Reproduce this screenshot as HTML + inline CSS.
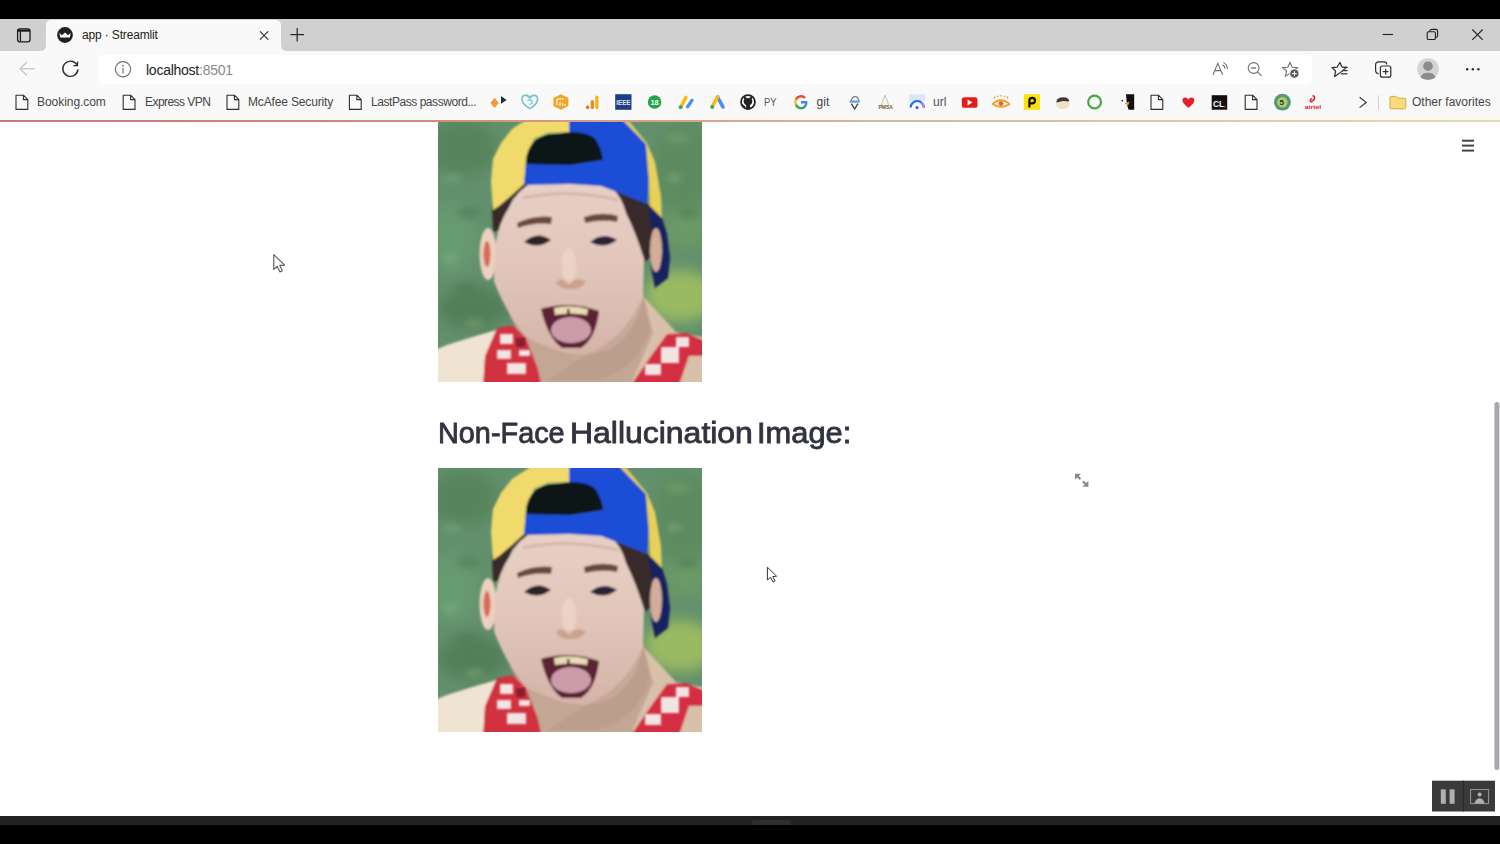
<!DOCTYPE html>
<html><head><meta charset="utf-8">
<style>
*{margin:0;padding:0;box-sizing:border-box}
html,body{width:1500px;height:844px;overflow:hidden;background:#fff;font-family:"Liberation Sans",sans-serif}
.a{position:absolute}
#topblack{left:0;top:0;width:1500px;height:19px;background:#000}
#tabstrip{left:0;top:19px;width:1500px;height:32px;background:#cfd0cf}
#tab{left:46px;top:20px;width:235px;height:31px;background:#f9f9f9;border-radius:5px 5px 0 0}
#toolbar{left:0;top:51px;width:1500px;height:35px;background:#f9f9f9}
#addr{left:98px;top:55px;width:1214px;height:29px;background:#fff;border-radius:5px}
#bm{left:0;top:86px;width:1500px;height:34px;background:#f9f9f9}
#deco{left:0;top:119.5px;width:1500px;height:2.5px;background:linear-gradient(90deg,#c47c6e,#d09078 30%,#d8b898 60%,#e2dcb0);filter:blur(0.5px)}
#content{left:0;top:121px;width:1500px;height:695px;background:#fff}
#bottom1{left:0;top:816px;width:1500px;height:9px;background:#212121}
#bottom2{left:0;top:825px;width:1500px;height:19px;background:#000}
.t{white-space:nowrap;color:#333}
.bmt{font-size:12px;color:#454545;top:95px}
</style></head>
<body>
<div class="a" id="topblack"></div>
<div class="a" id="tabstrip"></div>
<div class="a" id="tab"></div>
<div class="a" id="toolbar"></div>
<div class="a" id="addr"></div>
<div class="a" id="bm"></div>
<div class="a" id="content"></div>

<div class="a t" style="left:82px;top:28px;font-size:12px;color:#222;letter-spacing:-0.15px">app · Streamlit</div>
<div class="a t" style="left:146px;top:62px;font-size:14px;color:#222;letter-spacing:-0.25px">localhost<span style="color:#888">:8501</span></div>
<div class="a t bmt" style="left:37px;letter-spacing:-0.05px">Booking.com</div>
<div class="a t bmt" style="left:145px;letter-spacing:-0.55px">Express VPN</div>
<div class="a t bmt" style="left:248px;letter-spacing:-0.15px">McAfee Security</div>
<div class="a t bmt" style="left:371px;letter-spacing:-0.45px">LastPass password...</div>
<div class="a t bmt" style="left:1412px">Other favorites</div>

<div class="a t" style="left:438px;top:415.5px;font-size:29.8px;font-weight:normal;color:#31333f;-webkit-text-stroke:0.85px #31333f;transform-origin:0 0;transform:scaleX(0.968)">Non-Face</div><div class="a t" style="left:570px;top:415.5px;font-size:29.8px;font-weight:normal;color:#31333f;-webkit-text-stroke:0.85px #31333f;transform-origin:0 0;transform:scaleX(1.072)">Hallucination</div><div class="a t" style="left:757px;top:415.5px;font-size:29.8px;font-weight:normal;color:#31333f;-webkit-text-stroke:0.85px #31333f;transform-origin:0 0;transform:scaleX(1.035)">Image:</div>

<svg width="0" height="0" style="position:absolute">
<defs>
<filter id="bl" x="-5%" y="-5%" width="110%" height="110%"><feGaussianBlur stdDeviation="1.3"/></filter>
<filter id="bl3" x="-50%" y="-50%" width="200%" height="200%"><feGaussianBlur stdDeviation="3.5"/></filter>
<filter id="bl2" x="-30%" y="-30%" width="160%" height="160%"><feGaussianBlur stdDeviation="7"/></filter>
<clipPath id="cp"><rect x="0" y="0" width="264" height="264"/></clipPath>
<linearGradient id="skin" x1="0" y1="0" x2="0" y2="1">
<stop offset="0" stop-color="#e8d0c6"/><stop offset="0.5" stop-color="#e2c6ba"/><stop offset="1" stop-color="#d4b4a8"/>
</linearGradient>
<symbol id="face" viewBox="0 0 264 264">
<g clip-path="url(#cp)">
<rect x="-10" y="-10" width="284" height="284" fill="#62906c"/>
<g filter="url(#bl2)">
<ellipse cx="25" cy="30" rx="35" ry="28" fill="#56845c"/>
<ellipse cx="15" cy="120" rx="25" ry="35" fill="#689a70"/>
<ellipse cx="35" cy="190" rx="35" ry="22" fill="#527f58"/>
<ellipse cx="245" cy="50" rx="30" ry="45" fill="#5d8b5e"/>
<ellipse cx="248" cy="110" rx="22" ry="20" fill="#6a9a66"/>
<ellipse cx="242" cy="178" rx="36" ry="26" fill="#9aba62"/>
</g>
<g filter="url(#bl3)" opacity="0.7">
<ellipse cx="14" cy="60" rx="10" ry="4" fill="#74a67a"/>
<ellipse cx="30" cy="95" rx="12" ry="5" fill="#4f7e58"/>
<ellipse cx="12" cy="140" rx="9" ry="5" fill="#78aa80"/>
<ellipse cx="28" cy="170" rx="12" ry="4" fill="#4c7a54"/>
<ellipse cx="36" cy="205" rx="10" ry="4" fill="#7aa070"/>
<ellipse cx="240" cy="20" rx="12" ry="5" fill="#70a070"/>
<ellipse cx="250" cy="95" rx="10" ry="5" fill="#507e56"/>
<ellipse cx="236" cy="60" rx="8" ry="4" fill="#78a878"/>
</g>
<g filter="url(#bl)">
<!-- left shoulder -->
<path d="M-6 233 L9 227 L31 220 L55 213 L75 207 L88 220 L47 240 L45 270 L-6 270Z" fill="#efe4d2"/>
<!-- right shoulder -->
<path d="M203 176 L238 214 L270 220 L270 270 L191 270Z" fill="#d9c0aa"/>
<!-- neck -->
<path d="M72 198 L150 236 L205 175 L215 215 L191 270 L100 270 L86 222Z" fill="#c4a694"/>
<!-- hair dark -->
<path d="M55 114 L54 88 L74 66 L186 64 L209 85 L224 104 L222 132 L207 144 L196 118 L188 98 L180 80 L75 80 L62 112Z" fill="#38292a"/>
<!-- left ear -->
<ellipse cx="50" cy="136" rx="8.5" ry="26" fill="#ecd0c0"/>
<ellipse cx="49" cy="136" rx="3.5" ry="13" fill="#d86a58"/>
<!-- right ear -->

<!-- face -->
<path d="M72 88 Q80 70 100 62 L163 62 Q182 72 188 95 Q198 115 206 141 L205 179 Q198 216 172 232 Q150 240 125 234 Q100 226 88 219 L75 202 Q62 180 56 163 L57 130 Q60 105 72 88Z" fill="url(#skin)"/>
<!-- forehead wrinkles shade -->
<path d="M85 80 Q130 70 180 82" fill="none" stroke="#c8a08e" stroke-width="3" opacity="0.5"/>
<!-- yellow cap -->
<path d="M91 -6 L134 -6 L134 14 L110 15 L96 21 L88 39 L86 66 L74 77 L61 88 L55 92 L53 63 L55 41 L63 25 L74 11 L91 0Z" fill="#f0da6c"/>
<!-- blue cap -->
<path d="M131 -6 L183 -6 L183 0 L208 26 L211 62 L209 86 L184 76 L163 68 L132 66 L86 67 L88 45 L132 47 L165 42 L157 22 L131 14Z" fill="#1d4ed6"/>
<!-- right yellow strip -->
<path d="M183 -6 L190 2 L209 25 L217 44 L223 78 L224 102 L212 92 L211 62 L208 26 L183 0Z" fill="#e9d058"/>
<!-- navy strap -->
<path d="M210 86 L224 100 L229 116 L232 140 L230 160 L217 170 L213 150 L215 120Z" fill="#18225e"/>
<ellipse cx="218" cy="132" rx="6" ry="22" fill="#d4ac9a"/>
<!-- black opening -->
<path d="M88 46 Q88 23 108 17 L132 14 Q152 14 158 22 Q164 32 165 42 L132 47Z" fill="#101318"/>
<!-- eyebrows -->
<path d="M79 105 Q96 97 114 99 L113 106 Q96 104 80 110Z" fill="#6a4a3e"/>
<path d="M146 99 Q164 93 180 98 L179 104 Q164 101 147 105Z" fill="#6a4a3e"/>
<!-- eyes -->
<path d="M86 124 Q99 112 113 122 Q100 132 86 124Z" fill="#2e2228"/>
<path d="M152 124 Q165 113 179 122 Q166 132 152 124Z" fill="#2c2434"/>
<!-- nose -->
<path d="M118 165 Q124 172 132 171 Q142 172 148 164 Q142 160 138 162 L126 162 Q120 160 118 165Z" fill="#c59a84" opacity="0.8"/>
<ellipse cx="131" cy="148" rx="7" ry="18" fill="#f0dccc" opacity="0.6"/>
<!-- mouth -->
<path d="M103 191 Q132 182 161 193 Q158 220 143 230 L124 230 Q110 220 103 191Z" fill="#5a2030"/>
<ellipse cx="133" cy="212" rx="20" ry="13" fill="#cc9caa"/>
<path d="M116 190 Q132 186 150 191 L149 197 Q132 194 117 197Z" fill="#e8dcb4"/>
<rect x="129" y="191" width="2.5" height="7" fill="#5a2030"/>
<!-- stubble -->
<path d="M150 236 Q185 222 205 179 L212 210 Q200 250 160 262 L110 262 Z" fill="#b49482" opacity="0.45"/>
<!-- red shirt left -->
<path d="M45 270 L47 238 L59 210 L75 207 L88 220 L100 251 L104 270Z" fill="#d2303f"/>
<!-- red shirt right -->
<path d="M191 270 L213 238 L229 216 L248 215 L270 224 L270 238 L251 238 L240 270Z" fill="#d42f42"/>
</g>
<g filter="url(#bl)" fill="#f3e4e4">
<rect x="62" y="216" width="13" height="10"/>
<rect x="59" y="232" width="14" height="9"/>
<rect x="69" y="245" width="19" height="11"/>
<rect x="81" y="232" width="11" height="6"/>
<rect x="223" y="229" width="18" height="16"/>
<rect x="207" y="246" width="16" height="11"/>
<rect x="238" y="219" width="13" height="10"/>
</g>
<g filter="url(#bl)" fill="#8a1a30">
<rect x="78" y="220" width="9" height="9"/>
</g>
</g>
</symbol>
</defs>
</svg>
<div class="a" style="left:438px;top:122px;width:264px;height:260px;overflow:hidden"><svg style="position:absolute;left:0;top:-4px" width="264" height="264"><use href="#face"/></svg></div>
<svg class="a" style="left:438px;top:468px" width="264" height="264"><use href="#face"/></svg>

<div class="a" id="deco"></div>
<svg class="a" style="left:0;top:0" width="1500" height="130" viewBox="0 0 1500 130">
<!-- tab actions icon -->
<g fill="none" stroke="#1a1a1a" stroke-width="1.3">
<rect x="17.6" y="28.8" width="12.4" height="13" rx="2.2"/>
<line x1="17.6" y1="30.6" x2="30" y2="30.6" stroke-width="2.2"/>
<line x1="20.4" y1="31" x2="20.4" y2="41.5"/>
</g>
<!-- tab flare curves -->
<path d="M40 51 Q46 51 46 45 L46 51Z" fill="#f9f9f9"/>
<path d="M287 51 Q281 51 281 45 L281 51Z" fill="#f9f9f9"/>
<!-- favicon -->
<circle cx="65" cy="35" r="7.9" fill="#1f1f24"/>
<path d="M59.3 33 L62 35.2 L65 32.4 L68 35.2 L70.7 33 L69.8 37.6 L60.2 37.6Z" fill="#fff"/>
<!-- tab close -->
<g stroke="#333" stroke-width="1.2"><line x1="260" y1="31.4" x2="268.2" y2="39.6"/><line x1="268.2" y1="31.4" x2="260" y2="39.6"/></g>
<!-- new tab plus -->
<g stroke="#222" stroke-width="1.2"><line x1="290.4" y1="34.6" x2="304" y2="34.6"/><line x1="297.2" y1="27.9" x2="297.2" y2="41.5"/></g>
<!-- window controls -->
<line x1="1382.6" y1="34.5" x2="1393" y2="34.5" stroke="#222" stroke-width="1.1"/>
<g fill="none" stroke="#222" stroke-width="1.1">
<rect x="1427.2" y="31.7" width="8.2" height="7.8" rx="1.3"/>
<path d="M1429.4 31.5 Q1429.8 29.4 1431.8 29.4 L1435.8 29.4 Q1437.6 29.4 1437.6 31.2 L1437.6 35.4 Q1437.6 37.2 1435.6 37.6"/>
</g>
<g stroke="#222" stroke-width="1.1"><line x1="1472.3" y1="29.5" x2="1482.7" y2="39.8"/><line x1="1482.7" y1="29.5" x2="1472.3" y2="39.8"/></g>
<!-- back -->
<g fill="none" stroke="#c4c4c4" stroke-width="1.2"><path d="M27 62 L20 68.8 L27 75.6"/><line x1="20" y1="68.8" x2="35" y2="68.8"/></g>
<!-- reload -->
<g fill="none" stroke="#2a2a2a" stroke-width="1.4"><path d="M76.8 64.6 A7.6 7.6 0 1 0 78 69.4"/><path d="M77.6 61.6 L77.4 65.6 L73.4 65.6"/></g>
<!-- info -->
<g fill="none" stroke="#6e6e6e" stroke-width="1.2"><circle cx="123" cy="69.3" r="7.6"/><line x1="123" y1="67.8" x2="123" y2="73.4"/></g>
<circle cx="123" cy="65.6" r="0.9" fill="#6e6e6e"/>
<!-- read aloud -->
<g fill="none" stroke="#6f6f6f" stroke-width="1.1"><path d="M1213 74.8 L1217.8 63.4 L1222.6 74.8 M1214.8 70.6 L1220.8 70.6"/><path d="M1223.4 62.4 Q1227.4 64.8 1227.4 69"/><path d="M1222.6 64.8 Q1224.8 66.2 1225 68.6"/></g>
<!-- zoom out -->
<g fill="none" stroke="#6f6f6f" stroke-width="1.1"><circle cx="1253.6" cy="68" r="5.4"/><line x1="1257.4" y1="71.8" x2="1261.6" y2="75.8"/><line x1="1251" y1="68" x2="1256.2" y2="68" stroke-width="1.3"/></g>
<!-- star add -->
<path d="M1290 62.4 L1292.2 67.2 L1297.4 67.6 L1293.4 71 L1294.6 76.2 L1290 73.4 L1285.4 76.2 L1286.6 71 L1282.6 67.6 L1287.8 67.2Z" fill="none" stroke="#6f6f6f" stroke-width="1.1"/>
<circle cx="1294.4" cy="73.6" r="4.6" fill="#5a5a5a" stroke="#fff" stroke-width="0.8"/>
<g stroke="#fff" stroke-width="1"><line x1="1292" y1="73.6" x2="1296.8" y2="73.6"/><line x1="1294.4" y1="71.2" x2="1294.4" y2="76"/></g>
<!-- favorites -->
<path d="M1340 62.4 L1342 67 L1346.6 67.4 L1343 70.4 L1339 73.6 L1334.6 76.4 L1335.6 71 L1332 67.6 L1337 67.2Z" fill="none" stroke="#2e2e2e" stroke-width="1.2" stroke-linejoin="round"/>
<g stroke="#2e2e2e" stroke-width="1.2"><line x1="1342.6" y1="67.4" x2="1347.6" y2="67.4"/><line x1="1342" y1="70.6" x2="1347.6" y2="70.6"/><line x1="1341" y1="73.8" x2="1347.6" y2="73.8"/></g>
<!-- collections -->
<g fill="none" stroke="#2e2e2e" stroke-width="1.2">
<path d="M1378.6 73.6 Q1375.6 73.6 1375.6 70 L1375.6 64.8 Q1375.6 61.8 1378.8 61.8 L1384 61.8 Q1386.6 61.8 1386.8 64.4"/>
<rect x="1380.4" y="66" width="10.4" height="11.2" rx="2"/>
<line x1="1385.6" y1="68.8" x2="1385.6" y2="74.4"/><line x1="1382.8" y1="71.6" x2="1388.4" y2="71.6"/>
</g>
<!-- profile -->
<circle cx="1428" cy="69" r="10.8" fill="#d4d4d4"/>
<circle cx="1428" cy="66.2" r="4.8" fill="#8c8c8c"/>
<path d="M1420.6 77.6 Q1421.6 72.8 1428 72.8 Q1434.4 72.8 1435.4 77.6 Q1432 79.8 1428 79.8 Q1424 79.8 1420.6 77.6Z" fill="#8c8c8c"/>
<!-- more -->
<g fill="#2a2a2a"><circle cx="1467.2" cy="69.2" r="1.2"/><circle cx="1472.8" cy="69.2" r="1.2"/><circle cx="1478.4" cy="69.2" r="1.2"/></g>
<!-- bookmark doc icons -->
<g fill="none" stroke="#2e2e2e" stroke-width="1.1" stroke-linejoin="round">
<path d="M16 95.2 L23.4 95.2 L27.8 99.6 L27.8 109.4 L16 109.4Z M23.4 95.2 L23.4 99.6 L27.8 99.6"/>
<path d="M123.2 95.2 L130.6 95.2 L135 99.6 L135 109.4 L123.2 109.4Z M130.6 95.2 L130.6 99.6 L135 99.6"/>
<path d="M227 95.2 L234.4 95.2 L238.8 99.6 L238.8 109.4 L227 109.4Z M234.4 95.2 L234.4 99.6 L238.8 99.6"/>
<path d="M349.4 95.2 L356.8 95.2 L361.2 99.6 L361.2 109.4 L349.4 109.4Z M356.8 95.2 L356.8 99.6 L361.2 99.6"/>
<path d="M1151 95.2 L1158.4 95.2 L1162.8 99.6 L1162.8 109.4 L1151 109.4Z M1158.4 95.2 L1158.4 99.6 L1162.8 99.6"/>
<path d="M1245.2 95.2 L1252.6 95.2 L1257 99.6 L1257 109.4 L1245.2 109.4Z M1252.6 95.2 L1252.6 99.6 L1257 99.6"/>
</g>
<!-- 1 orange/teal diamonds -->
<path d="M494.6 97.8 L498.8 103 L494.6 108 L490.4 103Z" fill="#f39a3c"/>
<path d="M501 96 L506.6 100 L501 103.8Z" fill="#17343a"/>
<!-- 2 teal godaddy -->
<path d="M529.8 108.6 Q521.6 104 522 98.4 Q522.6 94.6 526.4 95.4 Q529.6 96.2 529.8 98.6 Q530.4 96 533.4 95.4 Q537.6 95 537.6 99.4 Q537.2 104.6 529.8 108.6Z" fill="none" stroke="#6cc3cf" stroke-width="1.6"/>
<path d="M527.4 101 Q530 98.8 532 101 Q533 104 529.6 104.4" fill="none" stroke="#6cc3cf" stroke-width="1.2"/>
<!-- 3 orange hex -->
<path d="M561 94.2 L568.4 98 L568.4 106 L561 109.8 L553.4 106 L553.4 98Z" fill="#f0a524"/>
<path d="M557 99 L563.6 99 M557 99 L557 105 M560 102 L560 106 M562.6 103 L562.6 106 M565 104 L565 106" stroke="#fff" stroke-width="1.1" fill="none"/>
<!-- 4 bars -->
<rect x="595.2" y="95.4" width="3.4" height="13.8" rx="1.7" fill="#f6b21b"/>
<rect x="590.6" y="100" width="3.4" height="9.2" rx="1.7" fill="#ee8a22"/>
<circle cx="587.6" cy="107.4" r="1.8" fill="#e9712c"/>
<!-- 5 IEEE -->
<rect x="615.2" y="94.2" width="16.3" height="15.6" fill="#1f3d82"/>
<text x="616.2" y="105.4" font-family="Liberation Sans" font-size="7" font-weight="bold" fill="#dfe6f6" textLength="14.4" lengthAdjust="spacingAndGlyphs">IEEE</text>
<!-- 6 green 18 -->
<circle cx="654.6" cy="102" r="6.8" fill="#23a548"/>
<text x="650.4" y="104.8" font-family="Liberation Sans" font-size="7.5" font-weight="bold" fill="#fff">18</text>
<!-- 7 google ads slash -->
<line x1="681" y1="106.6" x2="686" y2="97.4" stroke="#f9bb12" stroke-width="3.4" stroke-linecap="round"/>
<circle cx="680.6" cy="107.2" r="1.9" fill="#34a853"/>
<line x1="687.6" y1="106.8" x2="692" y2="100.4" stroke="#4d8ef7" stroke-width="3.4" stroke-linecap="round"/>
<!-- 8 ads A -->
<line x1="717.6" y1="97" x2="723" y2="107" stroke="#4a8af4" stroke-width="3.6" stroke-linecap="round"/>
<line x1="717.6" y1="97" x2="712.4" y2="106.4" stroke="#f9bb12" stroke-width="3.6" stroke-linecap="round"/>
<circle cx="712.2" cy="107" r="1.9" fill="#34a853"/>
<!-- 9 github -->
<circle cx="748" cy="102" r="7.8" fill="#222"/>
<circle cx="748" cy="102" r="6.1" fill="#fff"/>
<ellipse cx="748" cy="101.6" rx="4.3" ry="3.7" fill="#222"/>
<path d="M743.9 100 L744.2 95.8 L746.8 98 Z M752.1 100 L751.8 95.8 L749.2 98 Z" fill="#222"/>
<rect x="746.1" y="103" width="3.8" height="6.5" fill="#222"/>
<path d="M741.6 104.6 Q744 105.4 745 107.2" fill="none" stroke="#222" stroke-width="1.2"/>
<text x="764" y="106.4" font-family="Liberation Sans" font-size="11.5" fill="#555" textLength="12.6" lengthAdjust="spacingAndGlyphs">PY</text>
<!-- 10 google G -->
<g fill="none" stroke-width="2.4">
<path d="M805 98 A5.4 5.4 0 0 0 796 99.6" stroke="#ea4335"/>
<path d="M796 99.6 A5.4 5.4 0 0 0 796 104.6" stroke="#fbbc05"/>
<path d="M796 104.6 A5.4 5.4 0 0 0 805.4 106" stroke="#34a853"/>
<path d="M805.4 106 A5.4 5.4 0 0 0 806.2 102.2 L801 102.2" stroke="#4285f4"/>
</g>
<text x="816.6" y="106.4" font-family="Liberation Sans" font-size="12" fill="#444">git</text>
<!-- 11 -->
<path d="M851 101 Q852 96.6 855 96.6 Q858 96.6 859 101" fill="none" stroke="#7a7a7a" stroke-width="1.2"/>
<rect x="849.6" y="100.4" width="10.2" height="2.4" fill="#6fa2e0"/>
<path d="M851.4 103.6 L854.6 109 L858 103.6" fill="none" stroke="#444" stroke-width="1.4"/>
<!-- 12 PMSA -->
<path d="M881 106 L885 95 L889 106" fill="none" stroke="#c8c0b4" stroke-width="1"/>
<text x="878.4" y="108.8" font-family="Liberation Sans" font-size="5" font-weight="bold" fill="#7a5a2a">PMSA</text>
<!-- 13 blue arc -->
<rect x="909" y="94.2" width="16.2" height="7" fill="#dbe8fb"/>
<path d="M910.6 107.6 A6.6 6.6 0 0 1 923.8 107.6" fill="none" stroke="#1f6ef2" stroke-width="2.2"/>
<path d="M921 102.4 A6.6 6.6 0 0 1 923.8 107.6" fill="none" stroke="#b57ef0" stroke-width="2.2"/>
<circle cx="917" cy="107.6" r="1.6" fill="#1f6ef2"/>
<text x="933" y="106.4" font-family="Liberation Sans" font-size="12" fill="#505058">url</text>
<!-- 14 youtube -->
<rect x="961.8" y="97.2" width="15.7" height="10.6" rx="2.6" fill="#e41e16"/>
<path d="M967.6 99.6 L972.4 102.5 L967.6 105.4Z" fill="#fff"/>
<!-- 15 eye -->
<path d="M992.6 104 Q1001 96.4 1009.4 104 Q1001 110 992.6 104Z" fill="none" stroke="#f39a20" stroke-width="1.6"/>
<circle cx="1001" cy="103.6" r="2.4" fill="#e26a10"/>
<path d="M994 98.6 L995 96.6 M997.4 97.2 L997.8 95.6 M1001 96.6 L1001 95 M1004.4 97.2 L1004.8 95.6 M1008 98.6 L1007 96.6" stroke="#f39a20" stroke-width="1.2"/>
<!-- 16 yellow P -->
<rect x="1023.8" y="94.2" width="16.2" height="15.6" fill="#ffe10a"/>
<path d="M1029.4 107.6 L1029.4 100.4 Q1029.4 97.8 1032.2 97.8 Q1035 97.8 1035 100.6 Q1035 103.4 1032.2 103.4 L1030.4 103.4" fill="none" stroke="#111" stroke-width="2.2"/>
<!-- 17 face -->
<ellipse cx="1062.8" cy="104.4" rx="6.6" ry="4.6" fill="#f1e0c4"/>
<path d="M1056.4 103 Q1056 97.4 1062.8 97.2 Q1069.6 97.4 1069.2 101.6 L1062.8 101 L1056.6 102.6Z" fill="#3a3a3a"/>
<!-- 18 green ring -->
<circle cx="1094.6" cy="102" r="6.4" fill="none" stroke="#45a844" stroke-width="2.2"/>
<!-- 19 penguin -->
<path d="M1126 94.2 L1134.2 94.2 L1134.2 109.8 L1128.6 109.8 L1126.8 104 Z" fill="#111"/>
<path d="M1124.4 103.4 L1129.4 101.6 L1128.2 105.6Z" fill="#f0a02a"/>
<circle cx="1122.4" cy="100.6" r="0.9" fill="#222"/>
<!-- 21 heart -->
<path d="M1188.4 107.8 Q1182 103.2 1182.4 99.8 Q1183 97.2 1185.6 97.4 Q1187.4 97.6 1188.4 99.4 Q1189.4 97.6 1191.2 97.4 Q1193.8 97.2 1194.4 99.8 Q1194.8 103.2 1188.4 107.8Z" fill="#e5202a"/>
<!-- 22 CL -->
<rect x="1211.7" y="95.2" width="15.5" height="14.5" fill="#111"/>
<text x="1213" y="106.6" font-family="Liberation Sans" font-size="8.4" font-weight="bold" fill="#fff" textLength="11" lengthAdjust="spacingAndGlyphs">CL</text>
<circle cx="1224.6" cy="106.6" r="0.9" fill="#e8304a"/>
<!-- 24 green round -->
<circle cx="1282.4" cy="102.2" r="8.4" fill="#4e9a7a"/>
<circle cx="1282.4" cy="102.2" r="5.2" fill="#b8c86a"/>
<text x="1279.4" y="105.4" font-family="Liberation Sans" font-size="8" font-weight="bold" fill="#2a3a2a">5</text>
<!-- 25 airtel -->
<path d="M1312.6 95.6 Q1316 96.4 1313.6 100 Q1311.4 102.4 1310.4 101.4 Q1309.8 100 1312 98.4" fill="none" stroke="#e4202a" stroke-width="1.6"/>
<text x="1304.8" y="109" font-family="Liberation Sans" font-size="6" font-weight="bold" fill="#e4202a" textLength="16.4" lengthAdjust="spacingAndGlyphs">airtel</text>
<!-- chevron -->
<path d="M1359.6 97.3 L1366.2 102.4 L1359.6 107.6" fill="none" stroke="#333" stroke-width="1.2"/>
<line x1="1378.4" y1="95.2" x2="1378.4" y2="109.7" stroke="#cfcfcf" stroke-width="1"/>
<!-- folder -->
<path d="M1390 97.4 Q1390 96.4 1391 96.4 L1396 96.4 L1397.6 98.2 L1404.8 98.2 Q1405.8 98.2 1405.8 99.2 L1405.8 107.8 Q1405.8 108.8 1404.8 108.8 L1391 108.8 Q1390 108.8 1390 107.8Z" fill="#f9dc7a" stroke="#d9a83c" stroke-width="1"/>
</svg>
<div class="a" id="bottom1"></div>
<div class="a" id="bottom2"></div>
<svg class="a" style="left:0;top:121px" width="1500" height="723" viewBox="0 121 1500 723">
<!-- hamburger -->
<g stroke="#444" stroke-width="2"><line x1="1462" y1="140.7" x2="1474" y2="140.7"/><line x1="1462" y1="145.6" x2="1474" y2="145.6"/><line x1="1462" y1="150.6" x2="1474" y2="150.6"/></g>
<!-- expand icon -->
<g fill="#8a8a8a">
<path d="M1075 473.8 L1081 473.8 L1078.8 476 L1081.2 478.4 L1079.6 480 L1077.2 477.6 L1075 479.8Z"/>
<path d="M1088.4 486.8 L1082.4 486.8 L1084.6 484.6 L1082.2 482.2 L1083.8 480.6 L1086.2 483 L1088.4 480.8Z"/>
</g>
<!-- scrollbar -->
<rect x="1494.4" y="402" width="5" height="368" rx="2.5" fill="#a8a8ae"/>
<!-- cursor 1 -->
<path d="M273.8 254.6 L273.8 269.4 L277.2 266.4 L280 272 L282.4 270.8 L279.8 265.4 L284.6 265.2Z" fill="#fff" stroke="#555" stroke-width="1.1" stroke-linejoin="round"/>
<!-- cursor 2 -->
<path d="M767.4 567.2 L767.4 580 L770.6 577.4 L773 582 L775 581 L772.8 576.6 L776.6 576.2Z" fill="#fff" stroke="#333" stroke-width="1" stroke-linejoin="round"/>
<!-- bottom controls -->
<rect x="1432" y="780.7" width="63" height="30.8" fill="#3a3a3a"/>
<line x1="1463.4" y1="780.7" x2="1463.4" y2="811.5" stroke="#2a2a2a" stroke-width="1"/>
<rect x="1440.8" y="789.4" width="5" height="14.4" fill="#b0b0b0"/>
<rect x="1449.6" y="789.4" width="5" height="14.4" fill="#b0b0b0"/>
<rect x="1470.6" y="789.6" width="18" height="14" fill="none" stroke="#9a9a9a" stroke-width="1"/>
<circle cx="1479.6" cy="794.6" r="2" fill="#b0b0b0"/>
<path d="M1474.6 803.6 Q1475.6 798.4 1479.6 798.2 Q1483.6 798.4 1484.6 803.6Z" fill="#b0b0b0"/>
<!-- bottom pill -->
<path d="M752 825 L752 823 Q752 820 755 820 L788 820 Q791 820 791 823 L791 825Z" fill="#2e2e2e"/>
</svg>
</body></html>
